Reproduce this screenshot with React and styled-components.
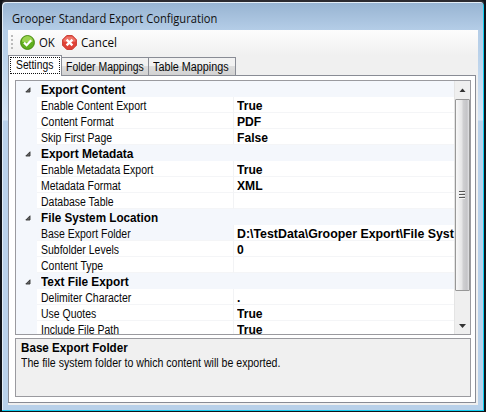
import React from 'react';
import styled, { createGlobalStyle } from 'styled-components';

const Global = createGlobalStyle`
  * { box-sizing: border-box; }
  body { margin: 0; overflow: hidden; background: #101318; font: 12px/16px "Liberation Sans", Arial, sans-serif; color: #080808; }
`;

const Window = styled.div`
  width: 486px; height: 412px; padding: 0 6px 6px 6px;
  border: 2px solid #101318; border-top-color: #2c2a2f; border-bottom-width: 1px;
  border-radius: 6px 6px 0 0; box-shadow: inset -1px -1px #12cdf0, inset 1px 1px #e4edf6;
  display: flex; flex-direction: column;
  background: linear-gradient(#e4edf6 1px, #98b4d2 1px, #b4cde7 28px, #b9d1ea 50px, #d6e5f5 118px, #b9d1ea 119px);
`;
const TitleBar = styled.header`
  flex: 0 0 28px; padding: 9px 0 0 4px; font: 12px/16px "Open Sans", sans-serif; color: #101010; white-space: nowrap;
`;
const Client = styled.main`
  flex: 1; width: 470px; min-height: 0; background: #f0f0f0; display: flex; flex-direction: column;
`;
const ToolBar = styled.div`
  flex: 0 0 25px; display: flex; align-items: center; background: linear-gradient(#fdfdfd, #f0f0f0);
  font: 12px/16px "Open Sans", sans-serif;
`;
const Grip = styled.div`
  width: 2px; height: 15px; margin: 0 7px 0 3px;
  background: repeating-linear-gradient(#bbb 0 2px, transparent 2px 4px);
`;
const ToolButton = styled.button`
  border: 0; padding: 0; background: none; font: inherit; color: inherit; display: flex; align-items: center; gap: 4px;
  width: ${p => p.$w}px; white-space: nowrap;
  svg { flex: none; }
`;
const Spaced = styled.span`
  display: inline-block; white-space: nowrap; transform: scaleX(${p => p.$x || 1}); transform-origin: 0 50%;
`;
const Tabs = styled.nav`
  flex: 0 0 20px; display: flex; align-items: flex-end;
`;
const Tab = styled.div`
  width: ${p => p.$w}px; height: ${p => (p.$on ? 21 : 18)}px; margin-bottom: ${p => (p.$on ? -1 : 0)}px;
  border: 1px solid #898c95; border-bottom: 0; margin-left: ${p => (p.$on ? 0 : -1)}px;
  background: ${p => (p.$on ? '#fff' : 'linear-gradient(#f2f2f2 45%, #dddddd 50%, #d2d2d2)')};
  padding: ${p => (p.$on ? '1px' : '1px 0 0 4px')}; z-index: ${p => (p.$on ? 1 : 0)};
`;
const Focus = styled.div`
  border: 1px dotted #111; height: 17px; padding-left: 5px; line-height: 14px;
`;
const Page = styled.section`
  width: 468px; height: 328px; border: 1px solid #898c95; background: #fff; padding: 4px 4px 5px 6px;
  display: flex; flex-direction: column; gap: 3px;
`;
const GridBox = styled.div`
  flex: 0 0 255px; width: 456px; border: 1px solid #9a9a9f; display: flex; overflow: hidden;
`;
const Rows = styled.div`
  flex: 1; min-width: 0; background: linear-gradient(90deg, #f4f7fc 21px, #fff 21px);
`;
const Row = styled.div`
  height: 16px; display: grid; grid-template-columns: 21px 197px 1fr; line-height: 19px;
`;
const Category = styled(Row)`
  grid-template-columns: 21px 1fr; background: #f4f7fc; font-weight: bold; color: #000;
`;
const Marker = styled.div`
  padding: 6px 0 0 9px; line-height: 0;
`;
const Name = styled.div`
  height: 16px; padding-left: 4px; border-bottom: 1px solid #f4f5f7; border-right: 1px solid #f2f3f5;
  background: ${p => (p.$sel ? '#f4f7fc' : '#fff')}; white-space: nowrap;
`;
const Value = styled.div`
  height: 16px; padding-left: 3px; border-bottom: 1px solid #f4f5f7; font-weight: bold; color: #000; white-space: nowrap;
`;
const CategoryName = styled.div`
  padding-left: 4px;
`;
const ScrollBar = styled.div`
  width: 16px; background: #efefef; display: flex; flex-direction: column; align-items: center; border-left: 1px solid #e4e4e4;
`;
const Arrow = styled.div`
  height: 17px; display: flex; align-items: center;
`;
const DownArrow = styled(Arrow)`
  margin-top: auto;
`;
const Thumb = styled.div`
  width: 15px; height: 192px; margin-top: 1px; border: 1px solid #979797; border-radius: 1px;
  background: linear-gradient(90deg, #f8f8f8, #e5e5e6 45%, #cfcfd1 55%, #c4c4c7 85%, #e4e4e6);
  display: flex; align-items: center; justify-content: center;
`;
const ThumbGrip = styled.div`
  width: 6px; height: 8px; margin-right: 2px;
  background: repeating-linear-gradient(#555 0 1px, #f5f5f5 1px 2px, transparent 2px 3px);
`;
const Help = styled.aside`
  flex: 0 0 59px; width: 456px; border: 1px solid #9a9a9f; background: #f0f0f0; padding: 1px 5px;
`;
const HelpTitle = styled.div`
  font-weight: bold; color: #000; height: 15px;
`;

const groups = [
  ['Export Content', 0.975, [
    ['Enable Content Export', 'True'], ['Content Format', 'PDF'], ['Skip First Page', 'False']]],
  ['Export Metadata', 0.99, [
    ['Enable Metadata Export', 'True'], ['Metadata Format', 'XML'], ['Database Table', '']]],
  ['File System Location', 0.975, [
    ['Base Export Folder', 'D:\\TestData\\Grooper Export\\File Syst', true], ['Subfolder Levels', '0'], ['Content Type', '']]],
  ['Text File Export', 0.985, [
    ['Delimiter Character', '.'], ['Use Quotes', 'True'], ['Include File Path', 'True']]],
];

const OkIcon = () => (
  <svg width="15" height="15" viewBox="0 0 15 15">
    <circle cx="7.5" cy="7.5" r="6.9" fill="#5fae1d" stroke="#47880f" />
    <path d="M2 6.5a5.5 5.5 0 0 1 11 0Q7.500 8.500 2 6.500Z" fill="#9ad34f" />
    <path d="M4 7.600 6.600 10.200 11.200 5.200" fill="none" stroke="#fff" strokeWidth="2.200" />
  </svg>
);
const CancelIcon = () => (
  <svg width="15" height="15" viewBox="0 0 15 15">
    <path d="M4.700.6h5.600l4.100 4.100v5.600l-4.100 4.100H4.700L.6 10.300V4.700Z" fill="#e04338" stroke="#c73a30" strokeLinejoin="round" />
    <path d="M4.800 1.500h5.400l3.300 3.300v1.700Q7 8 1.500 6.500V4.800Z" fill="#ee7468" />
    <path d="m4.600 4.600 5.800 5.800m0-5.800-5.800 5.800" stroke="#fff" strokeWidth="2.300" />
  </svg>
);

export default function App() {
  return (
    <>
      <Global />
      <Window>
        <TitleBar><Spaced $x={0.93}>Grooper Standard Export Configuration</Spaced></TitleBar>
        <Client>
          <ToolBar>
            <Grip />
            <ToolButton $w={42}><OkIcon /><Spaced $x={0.95}>OK</Spaced></ToolButton>
            <ToolButton $w={70}><CancelIcon /><Spaced $x={0.97}>Cancel</Spaced></ToolButton>
          </ToolBar>
          <Tabs>
            <Tab $on $w={54}><Focus><Spaced $x={0.86}>Settings</Spaced></Focus></Tab>
            <Tab $w={88}><Spaced $x={0.87}>Folder Mappings</Spaced></Tab>
            <Tab $w={88}><Spaced $x={0.9}>Table Mappings</Spaced></Tab>
          </Tabs>
          <Page>
            <GridBox>
              <Rows>
                {groups.map(([title, x, rows]) => (
                  <React.Fragment key={title}>
                    <Category>
                      <Marker><svg width="6" height="6"><path d="M5 .8v4.200H.8Z" fill="#666" stroke="#333" strokeWidth=".9" /></svg></Marker>
                      <CategoryName><Spaced $x={x}>{title}</Spaced></CategoryName>
                    </Category>
                    {rows.map(([name, value, sel]) => (
                      <Row key={name}>
                        <span />
                        <Name $sel={sel}><Spaced $x={0.873}>{name}</Spaced></Name>
                        <Value><Spaced $x={sel ? 1.03 : 1.01}>{value}</Spaced></Value>
                      </Row>
                    ))}
                  </React.Fragment>
                ))}
              </Rows>
              <ScrollBar>
                <Arrow><svg width="7" height="4"><path d="M.5 4 3.500.5 6.500 4Z" fill="#333" /></svg></Arrow>
                <Thumb><ThumbGrip /></Thumb>
                <DownArrow><svg width="7" height="4"><path d="M0 0h7L3.500 4Z" fill="#333" /></svg></DownArrow>
              </ScrollBar>
            </GridBox>
            <Help>
              <HelpTitle><Spaced $x={0.97}>Base Export Folder</Spaced></HelpTitle>
              <Spaced $x={0.882}>The file system folder to which content will be exported.</Spaced>
            </Help>
          </Page>
        </Client>
      </Window>
    </>
  );
}
